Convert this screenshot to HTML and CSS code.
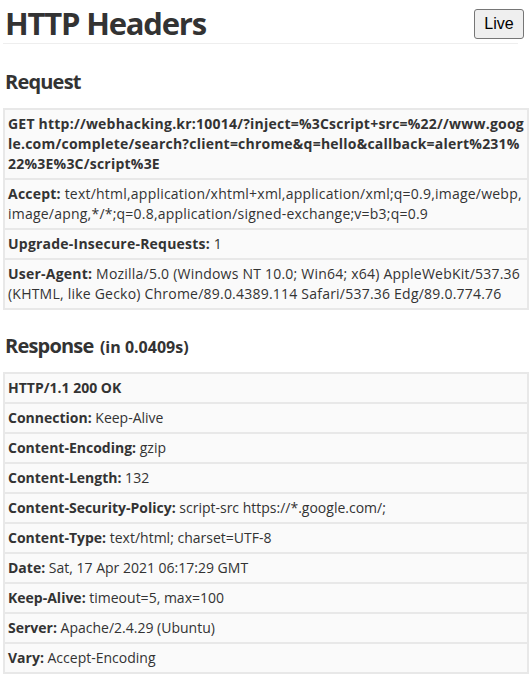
FILE: index.html
```html
<!DOCTYPE html>
<html>
<head>
<meta charset="utf-8">
<link rel="stylesheet" href="styles.css">
</head>
<body>
<header class="top">
  <h1 class="title">HTTP Headers</h1>
  <button class="live">Live</button>
</header>
<h2 class="section">Request</h2>
<table class="headers request">
  <tr><td class="long"><b>GET http://webhacking.kr:10014/?inject=%3Cscript+src=%22//www.google.com/complete/search?client=chrome&amp;q=hello&amp;callback=alert%231%22%3E%3C/script%3E</b></td></tr>
  <tr><td class="long"><b>Accept:</b> text/html,application/xhtml+xml,application/xml;q=0.9,image/webp,image/apng,*/*;q=0.8,application/signed-exchange;v=b3;q=0.9</td></tr>
  <tr><td><b>Upgrade-Insecure-Requests:</b> 1</td></tr>
  <tr><td><b>User-Agent:</b> Mozilla/5.0 (Windows NT 10.0; Win64; x64) AppleWebKit/537.36 (KHTML, like Gecko) Chrome/89.0.4389.114 Safari/537.36 Edg/89.0.774.76</td></tr>
</table>
<h2 class="section response-title">Response <span class="time">(in 0.0409s)</span></h2>
<table class="headers">
  <tr><td><b>HTTP/1.1 200 OK</b></td></tr>
  <tr><td><b>Connection:</b> Keep-Alive</td></tr>
  <tr><td><b>Content-Encoding:</b> gzip</td></tr>
  <tr><td><b>Content-Length:</b> 132</td></tr>
  <tr><td><b>Content-Security-Policy:</b> script-src https://*.google.com/;</td></tr>
  <tr><td><b>Content-Type:</b> text/html; charset=UTF-8</td></tr>
  <tr><td><b>Date:</b> Sat, 17 Apr 2021 06:17:29 GMT</td></tr>
  <tr><td><b>Keep-Alive:</b> timeout=5, max=100</td></tr>
  <tr><td><b>Server:</b> Apache/2.4.29 (Ubuntu)</td></tr>
  <tr><td><b>Vary:</b> Accept-Encoding</td></tr>
</table>
</body>
</html>
```

FILE: styles.css
```css
html, body {
  background: #ffffff;
}
body {
  margin: 0;
  padding: 3px;
  font-family: "Open Sans", "Noto Sans", sans-serif;
  font-size: 14px;
  color: #333333;
}
.top {
  display: grid;
}
.title {
  grid-area: 1 / 1;
  margin: 0 11px 0 0;
  font-size: 31px;
  line-height: 40px;
  font-weight: 700;
  color: #333333;
  padding-left: 2px;
  border-bottom: 1px solid #eeeeee;
  letter-spacing: -1.2px;
}
.live {
  grid-area: 1 / 1;
  justify-self: end;
  align-self: start;
  margin: 6px 5px 0 0;
  width: 50px;
  height: 30px;
  padding: 0;
  font-family: "Liberation Sans", Arial, sans-serif;
  font-size: 16px;
  color: #000000;
  background: #efefef;
  border: 1px solid #767676;
  border-radius: 3px;
}
.section {
  margin: 24px 0 12px;
  padding-left: 2px;
  font-size: 20px;
  line-height: 28px;
  font-weight: 700;
  letter-spacing: -0.8px;
}
.response-title {
  margin: 22px 0 11px;
}
.time {
  font-size: 16px;
  letter-spacing: 0;
  margin-left: 2px;
}
.headers {
  width: 100%;
  border-collapse: separate;
  border-spacing: 2px;
  background: #e8e8e8;
}
.headers td {
  background: #fafafa;
  padding: 4px 3px;
  line-height: 20px;
}
.request td {
  letter-spacing: 0.22px;
}
.headers td.long {
  word-break: break-all;
}
.headers b {
  font-weight: 700;
}
```
